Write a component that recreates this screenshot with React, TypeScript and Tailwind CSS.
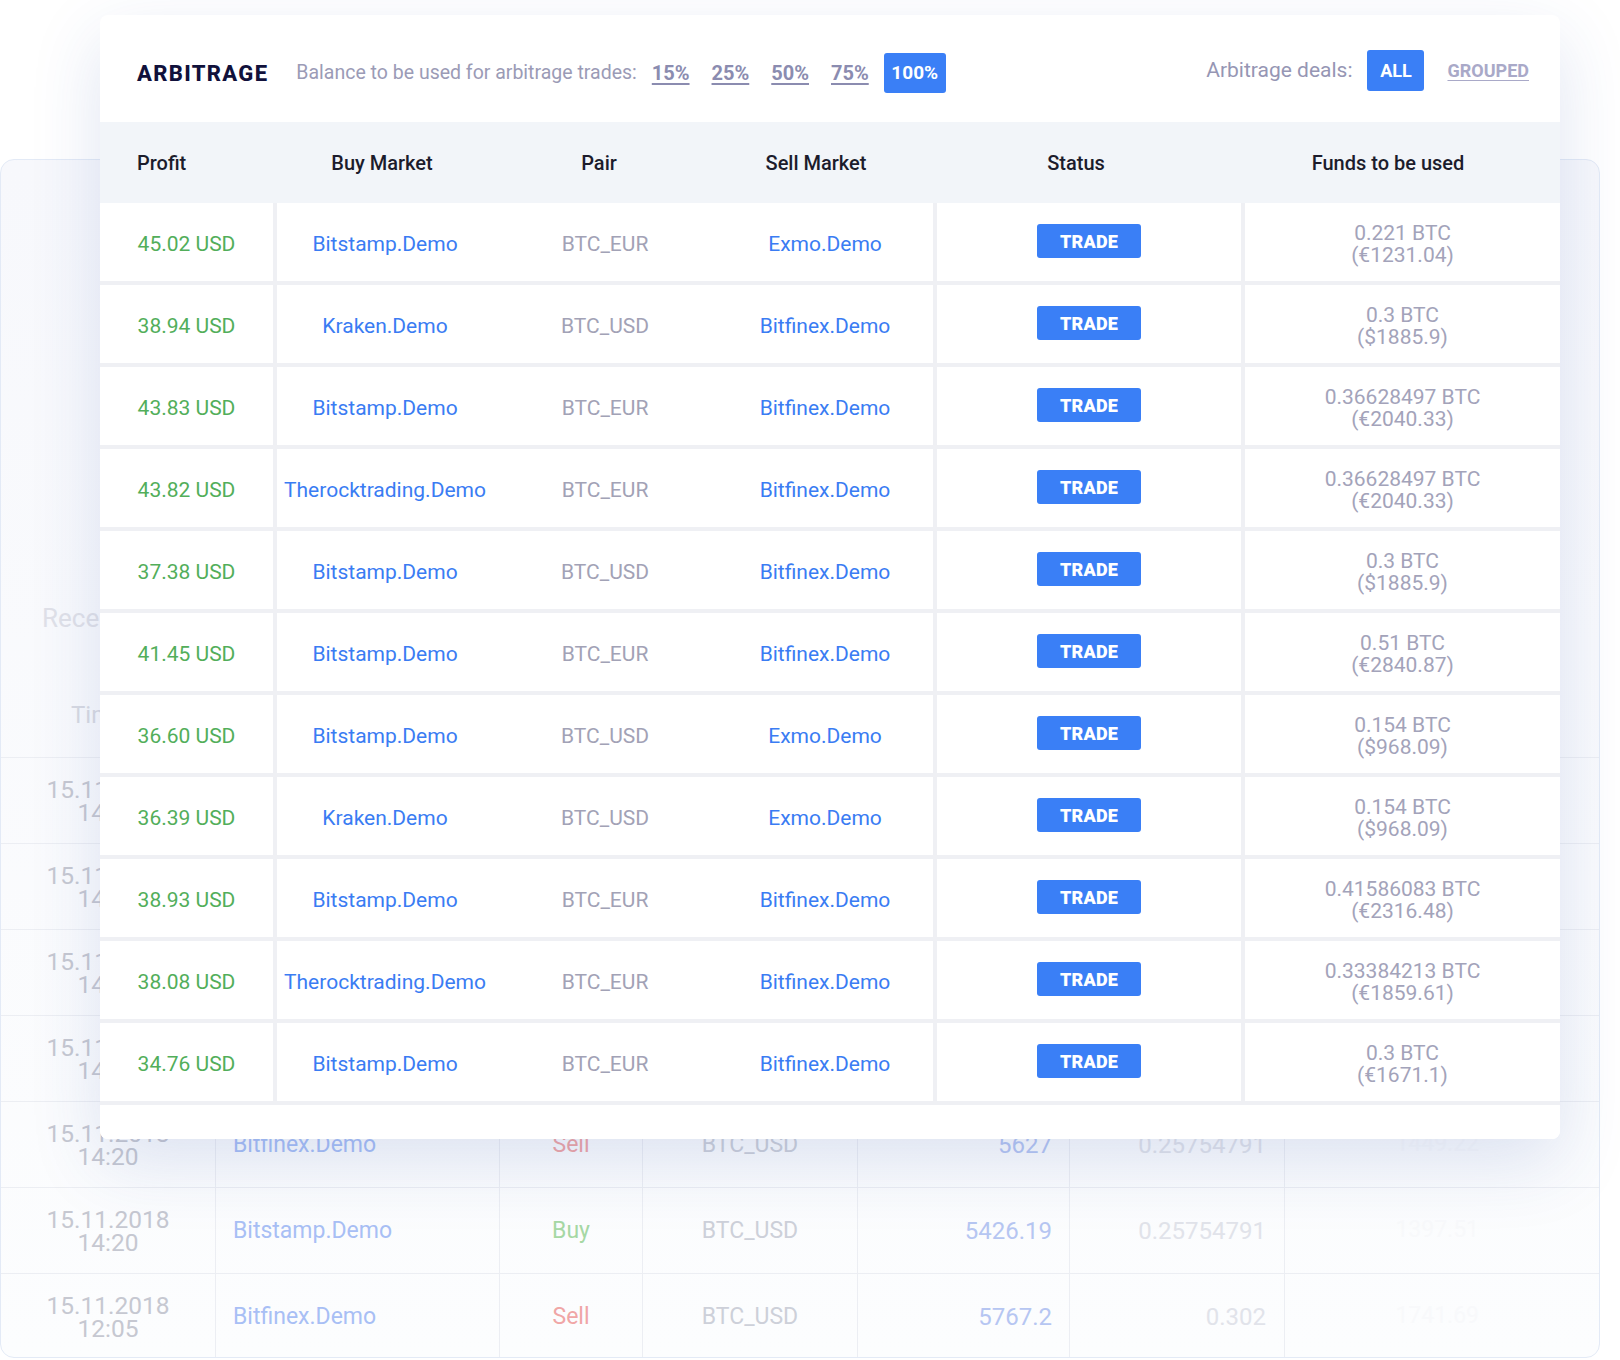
import React from "react";

type Deal = {
  profit: string;
  buy: string;
  pair: string;
  sell: string;
  btc: string;
  fiat: string;
};

const deals: Deal[] = [
  { profit: "45.02 USD", buy: "Bitstamp.Demo", pair: "BTC_EUR", sell: "Exmo.Demo", btc: "0.221 BTC", fiat: "(€1231.04)" },
  { profit: "38.94 USD", buy: "Kraken.Demo", pair: "BTC_USD", sell: "Bitfinex.Demo", btc: "0.3 BTC", fiat: "($1885.9)" },
  { profit: "43.83 USD", buy: "Bitstamp.Demo", pair: "BTC_EUR", sell: "Bitfinex.Demo", btc: "0.36628497 BTC", fiat: "(€2040.33)" },
  { profit: "43.82 USD", buy: "Therocktrading.Demo", pair: "BTC_EUR", sell: "Bitfinex.Demo", btc: "0.36628497 BTC", fiat: "(€2040.33)" },
  { profit: "37.38 USD", buy: "Bitstamp.Demo", pair: "BTC_USD", sell: "Bitfinex.Demo", btc: "0.3 BTC", fiat: "($1885.9)" },
  { profit: "41.45 USD", buy: "Bitstamp.Demo", pair: "BTC_EUR", sell: "Bitfinex.Demo", btc: "0.51 BTC", fiat: "(€2840.87)" },
  { profit: "36.60 USD", buy: "Bitstamp.Demo", pair: "BTC_USD", sell: "Exmo.Demo", btc: "0.154 BTC", fiat: "($968.09)" },
  { profit: "36.39 USD", buy: "Kraken.Demo", pair: "BTC_USD", sell: "Exmo.Demo", btc: "0.154 BTC", fiat: "($968.09)" },
  { profit: "38.93 USD", buy: "Bitstamp.Demo", pair: "BTC_EUR", sell: "Bitfinex.Demo", btc: "0.41586083 BTC", fiat: "(€2316.48)" },
  { profit: "38.08 USD", buy: "Therocktrading.Demo", pair: "BTC_EUR", sell: "Bitfinex.Demo", btc: "0.33384213 BTC", fiat: "(€1859.61)" },
  { profit: "34.76 USD", buy: "Bitstamp.Demo", pair: "BTC_EUR", sell: "Bitfinex.Demo", btc: "0.3 BTC", fiat: "(€1671.1)" },
];

type Trade = {
  date: string;
  time: string;
  market: string;
  side: "Buy" | "Sell";
  pair: string;
  price: string;
  amount: string;
  total: string;
};

const trades: Trade[] = [
  { date: "15.11.2018", time: "14:24", market: "Bitstamp.Demo", side: "Buy", pair: "BTC_EUR", price: "4987.5", amount: "0.221", total: "1102.24" },
  { date: "15.11.2018", time: "14:24", market: "Exmo.Demo", side: "Sell", pair: "BTC_EUR", price: "5570.3", amount: "0.221", total: "1231.04" },
  { date: "15.11.2018", time: "14:22", market: "Kraken.Demo", side: "Buy", pair: "BTC_USD", price: "5532.1", amount: "0.3", total: "1659.63" },
  { date: "15.11.2018", time: "14:22", market: "Bitfinex.Demo", side: "Sell", pair: "BTC_USD", price: "6286.3", amount: "0.3", total: "1885.9" },
  { date: "15.11.2018", time: "14:20", market: "Bitfinex.Demo", side: "Sell", pair: "BTC_USD", price: "5627", amount: "0.25754791", total: "1449.22" },
  { date: "15.11.2018", time: "14:20", market: "Bitstamp.Demo", side: "Buy", pair: "BTC_USD", price: "5426.19", amount: "0.25754791", total: "1397.51" },
  { date: "15.11.2018", time: "12:05", market: "Bitfinex.Demo", side: "Sell", pair: "BTC_USD", price: "5767.2", amount: "0.302", total: "1741.69" },
];

const font = { fontFamily: "Roboto, 'Liberation Sans', sans-serif" };

function RecentTrades() {
  return (
    <div className="relative mt-[159px] h-[1199px] w-[1600px] overflow-hidden rounded-[14px] border border-[#e3eaf6] bg-gradient-to-b from-[#f7f8fc] to-[#fcfdfe]">
      <div className="pl-[41px] pt-[442px] text-[26px] leading-[32px] text-[#e0e1e8]">Recent trades</div>
      <div className="mt-[38px] grid h-[86px] grid-cols-[215px_284px_143px_215px_212px_215px_1fr] items-center border-b border-[#eceef3] text-[24px] text-[#d8dae2]">
        <div className="pl-[70px]">Time</div>
        <div className="pl-[17px]">Market</div>
        <div className="text-center">Side</div>
        <div className="text-center">Pair</div>
        <div className="pr-[17px] text-right">Price</div>
        <div className="pr-[18px] text-right">Amount</div>
        <div className="pr-[120px] text-right">Total</div>
      </div>
      {trades.map((t, i) => (
        <div key={i} className="grid h-[86px] grid-cols-[215px_284px_143px_215px_212px_215px_1fr] border-b border-[#eceef3] text-[23px]">
          <div className="flex flex-col items-center justify-center border-r border-[#eceef3] text-[24.5px] leading-[23px] text-[#c6c8d1]">
            <span>{t.date}</span>
            <span>{t.time}</span>
          </div>
          <div className="flex items-center border-r border-[#eceef3] pl-[17px] pt-[2px] text-[#a8bff5]">{t.market}</div>
          <div className={`flex items-center justify-center border-r border-[#eceef3] pt-[2px] ${t.side === "Buy" ? "text-[#a6d8a4]" : "text-[#f0a6a6]"}`}>{t.side}</div>
          <div className="flex items-center justify-center border-r border-[#eceef3] pt-[2px] text-[#cdd0d9]">{t.pair}</div>
          <div className="flex items-center justify-end border-r border-[#eceef3] pr-[17px] text-[24px] text-[#b6c6f2]">{t.price}</div>
          <div className="flex items-center justify-end border-r border-[#eceef3] pr-[18px] text-[24px] text-[#e1e3ea]">{t.amount}</div>
          <div className="flex items-center justify-end pr-[120px] text-[#f8f9fb]">{t.total}</div>
        </div>
      ))}
    </div>
  );
}

function TableHeader() {
  return (
    <div className="grid h-[81px] grid-cols-[175px_214px_220px_214px_306px_318px] items-center bg-[#f2f5f9] text-[20px] font-medium text-[#1c1c2c]">
      <div className="pl-[37px]">Profit</div>
      <div className="text-center">Buy Market</div>
      <div className="text-center">Pair</div>
      <div className="text-center">Sell Market</div>
      <div className="text-center">Status</div>
      <div className="text-center">Funds to be used</div>
    </div>
  );
}

function DealRow({ deal }: { deal: Deal }) {
  return (
    <div className="grid h-[78px] grid-cols-[173px_656px_304px_1fr] gap-[4px] text-[21px]">
      <div className="flex items-center justify-center bg-white pt-[5px] text-[#52ae5a]">{deal.profit}</div>
      <div className="grid grid-cols-[216px_224px_1fr] bg-white pt-[5px]">
        <div className="flex items-center justify-center text-[#3a7cf3]">{deal.buy}</div>
        <div className="flex items-center justify-center text-[#a2a2b6]">{deal.pair}</div>
        <div className="flex items-center justify-center text-[#3a7cf3]">{deal.sell}</div>
      </div>
      <div className="flex items-center justify-center bg-white pb-[2px]">
        <button className="h-[34px] w-[104px] rounded-[3px] bg-[#3a7ff6] text-[18px] font-black tracking-[0.01em] text-white">TRADE</button>
      </div>
      <div className="flex flex-col items-center justify-center bg-white pt-[4px] leading-[22px] text-[#a3a3ba]">
        <span>{deal.btc}</span>
        <span>{deal.fiat}</span>
      </div>
    </div>
  );
}

function ArbitrageCard() {
  const shares = ["15%", "25%", "50%", "75%"];
  return (
    <div className="absolute left-[100px] top-[15px] w-[1460px] overflow-hidden rounded-lg bg-white shadow-[0_24px_70px_rgba(48,82,168,0.15)]">
      <div className="flex h-[107px] items-center justify-between pl-[37px] pr-[31px] pt-[4px]">
        <div className="flex items-center pt-[5px]">
          <h1 className="text-[22px] font-extrabold tracking-[0.06em] text-[#11113b]">ARBITRAGE</h1>
          <span className="ml-[28px] text-[19.5px] text-[#9b9bb6]">Balance to be used for arbitrage trades:</span>
          <div className="ml-[15px] flex items-center gap-[22px]">
            {shares.map((s) => (
              <a key={s} href="#" className="text-[20px] font-bold text-[#8b8cb0] underline underline-offset-[3px]">
                {s}
              </a>
            ))}
          </div>
          <button className="ml-[15px] h-[40px] w-[62px] rounded-[3px] bg-[#3a7ff6] text-[19px] font-bold text-white">100%</button>
        </div>
        <div className="flex items-center">
          <span className="text-[21px] text-[#9696b4]">Arbitrage deals:</span>
          <button className="ml-[15px] h-[41px] w-[57px] rounded-[3px] bg-[#3a7ff6] text-[18px] font-bold text-white">ALL</button>
          <a href="#" className="ml-[23px] text-[18px] font-bold text-[#a9a9c8] underline underline-offset-[3px]">
            GROUPED
          </a>
        </div>
      </div>
      <TableHeader />
      <div className="flex flex-col gap-[4px] bg-[#eff0f4] pb-[4px]">
        {deals.map((d, i) => (
          <DealRow key={i} deal={d} />
        ))}
      </div>
      <div className="h-[34px] bg-white" />
    </div>
  );
}

export default function App() {
  return (
    <div className="relative h-[1360px] w-[1620px] overflow-hidden bg-white" style={font}>
      <RecentTrades />
      <ArbitrageCard />
    </div>
  );
}
